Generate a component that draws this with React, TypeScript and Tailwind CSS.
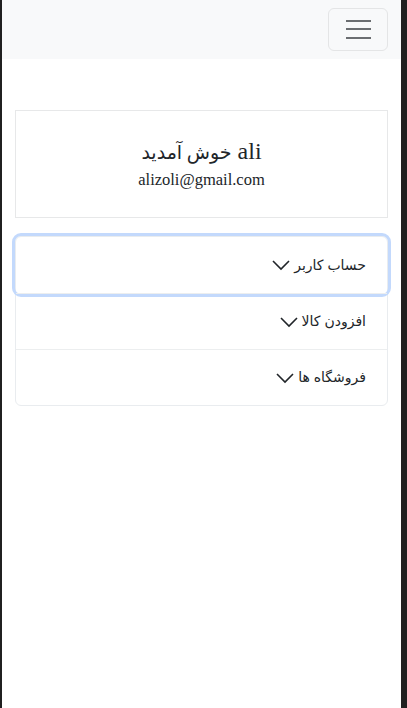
import React from "react";

const Chevron = () => (
  <svg width="18" height="12" viewBox="0 0 18 12" fill="none" className="shrink-0">
    <polyline points="1,2 9,10 17,2" stroke="#212529" strokeWidth="1.6" fill="none" />
  </svg>
);

const items = ["حساب کاربر", "افزودن کالا", "فروشگاه ها"];

export default function App() {
  return (
    <div className="flex h-screen w-full bg-[#202020]">
      <div className="w-[2px] shrink-0 bg-[#202020]" />
      <div className="flex-1 bg-white flex flex-col">
        <nav className="h-[59px] bg-[#f8f9fa] flex items-center justify-end pr-[13px]">
          <button className="w-[60px] h-[43px] mt-[-1px] rounded-[6px] border border-[#e4e5e6] flex flex-col items-center justify-center gap-[6.5px]">
            <span className="block w-[25px] h-[2px] bg-[#6b6e71]" />
            <span className="block w-[25px] h-[2px] bg-[#6b6e71]" />
            <span className="block w-[25px] h-[2px] bg-[#6b6e71]" />
          </button>
        </nav>
        <div className="px-[13px] pt-[51px]">
          <div
            className="h-[108px] border border-[#e7e8e9] flex flex-col items-center justify-center text-[#212529]"
            style={{ fontFamily: '"Liberation Serif", "DejaVu Sans", serif' }}
          >
            <div className="text-[24px] leading-[29px] flex items-baseline gap-[6px]">
              <span className="text-[19px]" dir="rtl">خوش آمدید</span>
              <span>ali</span>
            </div>
            <div className="text-[16.5px] leading-[24px] mt-[1px]">alizoli@gmail.com</div>
          </div>
          <div className="mt-[18px] rounded-[6px] border border-[#e9ecef] relative">
            {items.map((t, i) => (
              <div
                key={i}
                className={
                  "h-[56px] flex items-center justify-end pr-[21px] gap-[4px] text-[14px] text-[#212529] relative " +
                  (i > 0 ? "border-t border-[#eceeef]" : "")
                }
                style={{ fontFamily: '"Liberation Sans", "DejaVu Sans", sans-serif' }}
              >
                {i === 0 && (
                  <div className="absolute -inset-[4px] rounded-[9px] border-[3.5px] border-[#c3d9fc] pointer-events-none" />
                )}
                <Chevron />
                <span dir="rtl">{t}</span>
              </div>
            ))}
          </div>
        </div>
      </div>
      <div className="w-[6px] shrink-0 bg-[#202020]" />
    </div>
  );
}
